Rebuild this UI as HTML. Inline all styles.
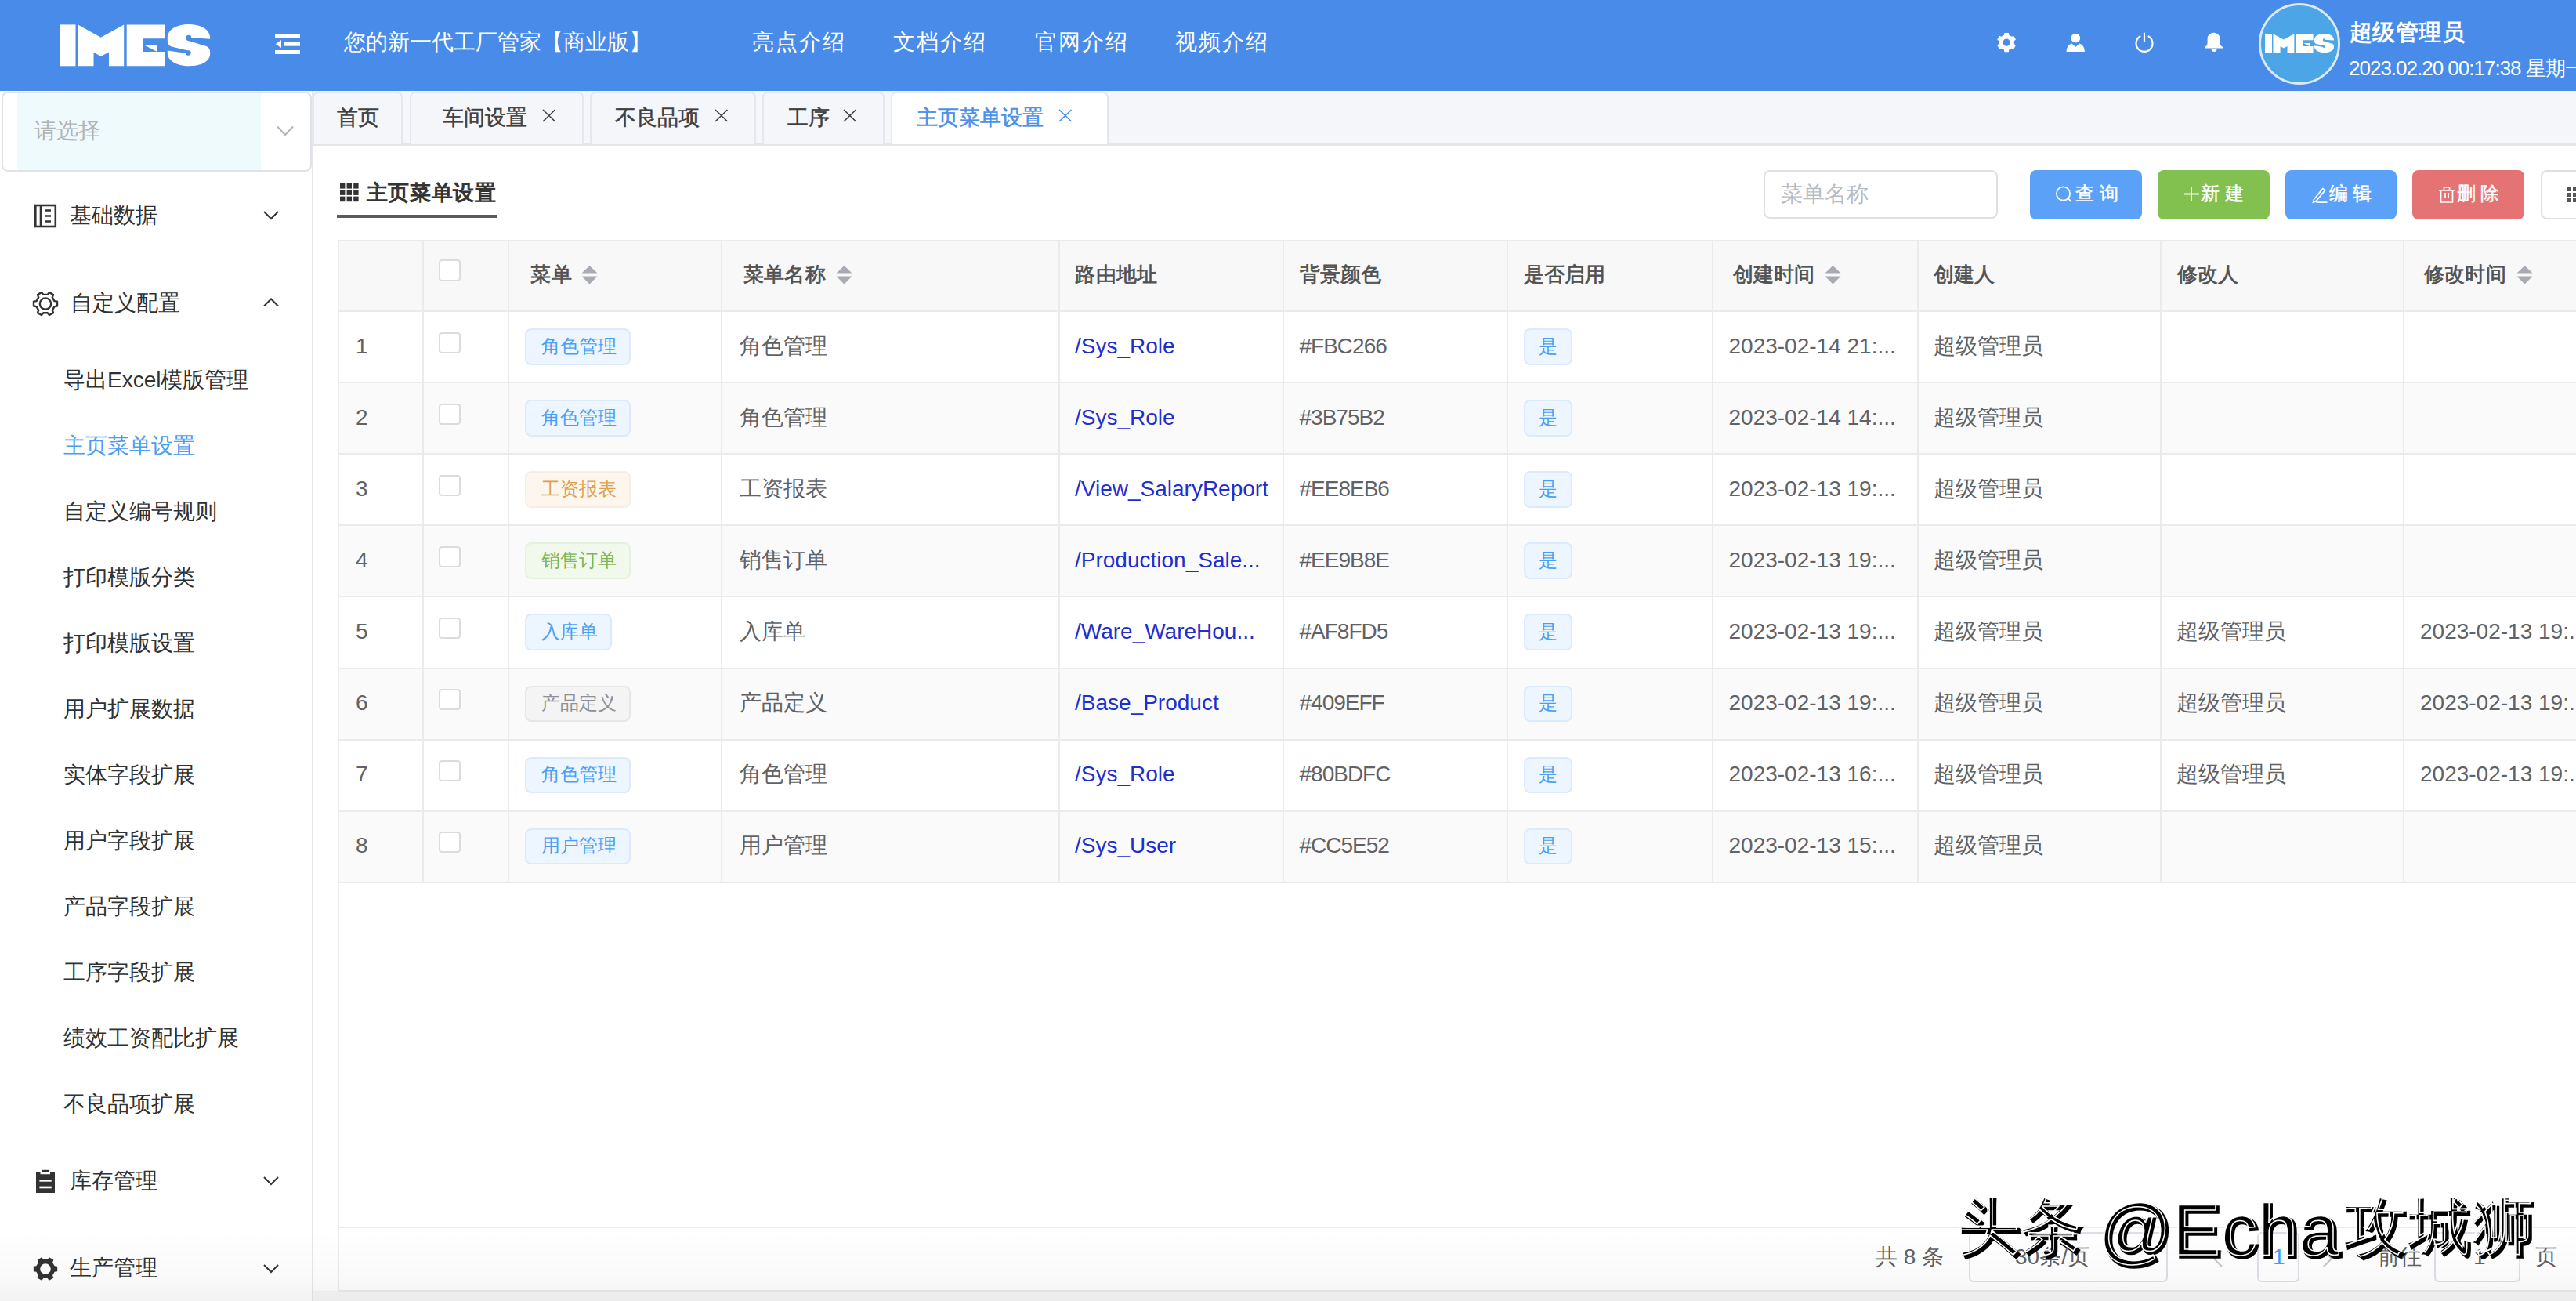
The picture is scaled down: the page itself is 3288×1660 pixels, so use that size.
<!DOCTYPE html><html><head><meta charset="utf-8"><style>
html,body{margin:0;padding:0;}
body{width:3288px;height:1660px;overflow:hidden;position:relative;background:#f4f4f5;font-family:"Liberation Sans", sans-serif;}
.t{position:absolute;white-space:nowrap;}
.r{position:absolute;box-sizing:border-box;}
svg{position:absolute;overflow:visible;}
</style></head><body>
<div class="r" style="left:398.0px;top:116.0px;width:2890.0px;height:1530.5px;background:#fff;"></div>
<div class="r" style="left:0.0px;top:0.0px;width:3288.0px;height:116.0px;background:#488be8;"></div>
<svg style="left:76.8px;top:31px" width="191.2" height="53.3" viewBox="0 0 191.2 53.3" preserveAspectRatio="none">
<g fill="#fff">
<rect x="0" y="0.4" width="19.5" height="52.9"/>
<path d="M22.6 0.4 L51.7 16.7 L81.2 0.4 L81.2 53.3 L62 53.3 L62 35.4 L51.7 41 L42.5 35.4 L42.5 53.3 L22.6 53.3 Z"/>
<path d="M84.7 0.4 L133.7 0.4 L133.7 18.3 L105 18.3 L105 35 L133.7 35 L133.7 53.3 L84.7 53.3 Z"/>
<path d="M107 26.6 L123.7 26.6 L123.7 35 Z"/>
<path d="M164.2 0 C180 0 191.2 7 191.2 17.5 L191.2 18.8 L164.2 17 C159 16.6 159 20.2 164 21.3 L185 27.5 C191 29.5 191.2 33 191.2 38 C191.2 47 180 53.3 164.2 53.3 C148 53.3 136.8 46 136.8 36.5 L136.8 33.5 L163.2 37.2 C167.6 37.7 167.6 34.6 163 33.6 L142 28.5 C137 27 136.8 22 136.8 17.5 C136.8 7 148 0 164.2 0 Z"/>
</g>
<circle cx="163.9" cy="17" r="3.3" fill="#488be8"/>
<circle cx="163.3" cy="36.5" r="3.3" fill="#488be8"/>
</svg>
<svg style="left:340px;top:30px" width="60" height="50" viewBox="340 30 60 50">
<g fill="#fff"><rect x="351" y="43" width="32" height="5"/><rect x="362" y="53.7" width="21" height="5"/><rect x="351" y="64" width="32" height="5"/>
<path d="M351.7 56.2 L359 51 L359 61 Z"/></g></svg>
<div class="t " style="left:439.0px;top:40.3px;font-size:28px;line-height:28px;color:#fff;font-weight:normal;letter-spacing:0px;">您的新一代工厂管家【商业版】</div>
<div class="t " style="left:960.0px;top:39.8px;font-size:28px;line-height:28px;color:#fff;font-weight:normal;letter-spacing:2px;">亮点介绍</div>
<div class="t " style="left:1140.0px;top:39.8px;font-size:28px;line-height:28px;color:#fff;font-weight:normal;letter-spacing:2px;">文档介绍</div>
<div class="t " style="left:1321.0px;top:39.8px;font-size:28px;line-height:28px;color:#fff;font-weight:normal;letter-spacing:2px;">官网介绍</div>
<div class="t " style="left:1500.0px;top:39.8px;font-size:28px;line-height:28px;color:#fff;font-weight:normal;letter-spacing:2px;">视频介绍</div>
<svg style="left:2540px;top:30px" width="320" height="50" viewBox="2540 30 320 50">
<g fill="#fff">
<path fill-rule="evenodd" d="M2570.82 56.09 L2572.96 57.83 L2570.17 62.66 L2567.59 61.67 L2564.32 63.56 L2563.89 66.28 L2558.31 66.28 L2557.88 63.56 L2554.61 61.67 L2552.03 62.66 L2549.24 57.83 L2551.38 56.09 L2551.38 52.31 L2549.24 50.57 L2552.03 45.74 L2554.61 46.73 L2557.88 44.84 L2558.31 42.12 L2563.89 42.12 L2564.32 44.84 L2567.59 46.73 L2570.17 45.74 L2572.96 50.57 L2570.82 52.31 Z M2565.70 54.2 A4.6 4.6 0 1 0 2556.50 54.2 A4.6 4.6 0 1 0 2565.70 54.2 Z"/>
<circle cx="2649.3" cy="48.6" r="5.9"/>
<path d="M2637.5 66 C2638 60 2640.5 56.5 2644.5 55.6 L2649.3 60 L2654 55.6 C2658 56.5 2660.5 60 2661 66 Z"/>
<path d="M2814 61.5 h23 v-1.8 c-2 -1 -3.4 -2.5 -3.4 -5.5 v-4.5 c0 -4.5 -3 -7.5 -8 -7.9 c-5 0.4 -8 3.4 -8 7.9 v4.5 c0 3 -1.4 4.5 -3.4 5.5 Z"/>
<path d="M2822.5 62.5 h7 a3.5 3.5 0 0 1 -7 0 Z"/>
</g>
<g fill="none" stroke="#fff" stroke-width="2.2" stroke-linecap="round">
<path d="M2731.5 46.5 A10.5 10.5 0 1 0 2742.5 46.5"/>
<path d="M2737 42.5 V53"/>
</g>
</svg>
<div class="r" style="left:2883.0px;top:4.0px;width:104.0px;height:104.0px;border-radius:50%;background:#4ba5e7;border:3px solid #dce9f7;"></div>
<svg style="left:2891px;top:43px" width="88" height="24.2" viewBox="0 0 191.2 53.3" preserveAspectRatio="none">
<g fill="#fff">
<rect x="0" y="0.4" width="19.5" height="52.9"/>
<path d="M22.6 0.4 L51.7 16.7 L81.2 0.4 L81.2 53.3 L62 53.3 L62 35.4 L51.7 41 L42.5 35.4 L42.5 53.3 L22.6 53.3 Z"/>
<path d="M84.7 0.4 L133.7 0.4 L133.7 18.3 L105 18.3 L105 35 L133.7 35 L133.7 53.3 L84.7 53.3 Z"/>
<path d="M107 26.6 L123.7 26.6 L123.7 35 Z"/>
<path d="M164.2 0 C180 0 191.2 7 191.2 17.5 L191.2 18.8 L164.2 17 C159 16.6 159 20.2 164 21.3 L185 27.5 C191 29.5 191.2 33 191.2 38 C191.2 47 180 53.3 164.2 53.3 C148 53.3 136.8 46 136.8 36.5 L136.8 33.5 L163.2 37.2 C167.6 37.7 167.6 34.6 163 33.6 L142 28.5 C137 27 136.8 22 136.8 17.5 C136.8 7 148 0 164.2 0 Z"/>
</g>
<circle cx="163.9" cy="17" r="3.3" fill="#4ba5e7"/>
<circle cx="163.3" cy="36.5" r="3.3" fill="#4ba5e7"/>
</svg>
<div class="t " style="left:2998.5px;top:26.6px;font-size:29px;line-height:29px;color:#fff;font-weight:bold;letter-spacing:0.5px;">超级管理员</div>
<div class="t" style="left:2998px;top:72px;font-size:26px;line-height:30px;color:#fff;letter-spacing:-1px;">2023.02.20 00:17:38 星期一</div>
<div class="r" style="left:0.0px;top:116.0px;width:398.0px;height:1544.0px;background:#fff;"></div>
<div class="r" style="left:1.5px;top:117.0px;width:396.5px;height:101.5px;border:2px solid #dfe3e8;border-radius:8px;background:#fff;"></div>
<div class="r" style="left:22.0px;top:119.0px;width:311.0px;height:97.5px;background:#effafd;"></div>
<div class="t " style="left:44.0px;top:152.6px;font-size:28px;line-height:28px;color:#b0b3b8;font-weight:normal;letter-spacing:0px;">请选择</div>
<svg style="left:350px;top:155px" width="30" height="25" viewBox="350 155 30 25"><path d="M354 161.5 L364 172 L374 161.5" fill="none" stroke="#b0b3b8" stroke-width="2"/></svg>
<svg style="left:40px;top:255px" width="40" height="40" viewBox="40 255 40 40"><g fill="none" stroke="#333" stroke-width="2.6">
<rect x="45.3" y="262" width="25.5" height="27"/><path d="M52 262 V289 M57 268.5 H65 M57 275.5 H65 M57 282.5 H65"/></g></svg>
<div class="t " style="left:88.6px;top:260.6px;font-size:28px;line-height:28px;color:#303133;font-weight:normal;letter-spacing:0px;">基础数据</div>
<svg style="left:330px;top:260px" width="30" height="30" viewBox="330 260 30 30"><path d="M337 270 L346 279 L355 270" fill="none" stroke="#333" stroke-width="2"/></svg>
<svg style="left:38px;top:367px" width="40" height="40" viewBox="38 367 40 40"><g fill="none" stroke="#333" stroke-width="2.4" stroke-linejoin="round">
<path d="M69.48 384.09 L73.02 384.68 L73.02 390.52 L69.48 391.11 L66.78 395.78 L68.04 399.15 L62.98 402.07 L60.70 399.29 L55.30 399.29 L53.02 402.07 L47.96 399.15 L49.22 395.78 L46.52 391.11 L42.98 390.52 L42.98 384.68 L46.52 384.09 L49.22 379.42 L47.96 376.05 L53.02 373.13 L55.30 375.91 L60.70 375.91 L62.98 373.13 L68.04 376.05 L66.78 379.42 Z"/>
<circle cx="58" cy="387.6" r="7.2"/></g></svg>
<div class="t " style="left:90.0px;top:373.1px;font-size:28px;line-height:28px;color:#303133;font-weight:normal;letter-spacing:0px;">自定义配置</div>
<svg style="left:330px;top:372px" width="30" height="30" viewBox="330 372 30 30"><path d="M337 390.5 L346 381.5 L355 390.5" fill="none" stroke="#333" stroke-width="2"/></svg>
<div class="t " style="left:81.0px;top:470.6px;font-size:28px;line-height:28px;color:#303133;font-weight:normal;letter-spacing:0px;">导出Excel模版管理</div>
<div class="t " style="left:81.0px;top:554.6px;font-size:28px;line-height:28px;color:#4c9cf0;font-weight:normal;letter-spacing:0px;">主页菜单设置</div>
<div class="t " style="left:81.0px;top:638.7px;font-size:28px;line-height:28px;color:#303133;font-weight:normal;letter-spacing:0px;">自定义编号规则</div>
<div class="t " style="left:81.0px;top:722.8px;font-size:28px;line-height:28px;color:#303133;font-weight:normal;letter-spacing:0px;">打印模版分类</div>
<div class="t " style="left:81.0px;top:806.9px;font-size:28px;line-height:28px;color:#303133;font-weight:normal;letter-spacing:0px;">打印模版设置</div>
<div class="t " style="left:81.0px;top:890.9px;font-size:28px;line-height:28px;color:#303133;font-weight:normal;letter-spacing:0px;">用户扩展数据</div>
<div class="t " style="left:81.0px;top:975.0px;font-size:28px;line-height:28px;color:#303133;font-weight:normal;letter-spacing:0px;">实体字段扩展</div>
<div class="t " style="left:81.0px;top:1059.1px;font-size:28px;line-height:28px;color:#303133;font-weight:normal;letter-spacing:0px;">用户字段扩展</div>
<div class="t " style="left:81.0px;top:1143.1px;font-size:28px;line-height:28px;color:#303133;font-weight:normal;letter-spacing:0px;">产品字段扩展</div>
<div class="t " style="left:81.0px;top:1227.2px;font-size:28px;line-height:28px;color:#303133;font-weight:normal;letter-spacing:0px;">工序字段扩展</div>
<div class="t " style="left:81.0px;top:1311.3px;font-size:28px;line-height:28px;color:#303133;font-weight:normal;letter-spacing:0px;">绩效工资配比扩展</div>
<div class="t " style="left:81.0px;top:1395.3px;font-size:28px;line-height:28px;color:#303133;font-weight:normal;letter-spacing:0px;">不良品项扩展</div>
<svg style="left:40px;top:1488px" width="40" height="40" viewBox="40 1488 40 40"><g fill="#333">
<rect x="53.4" y="1492.8" width="8.6" height="2.6"/>
<path d="M46 1496 h5.5 v2.2 h12.5 v-2.2 h6 v26 h-24 Z"/></g><g fill="#fff"><rect x="50.4" y="1505" width="15.3" height="2.7"/><rect x="50.4" y="1513.6" width="15.3" height="2.7"/></g></svg>
<div class="t " style="left:89.0px;top:1493.3px;font-size:28px;line-height:28px;color:#303133;font-weight:normal;letter-spacing:0px;">库存管理</div>
<svg style="left:330px;top:1495px" width="30" height="30" viewBox="330 1495 30 30"><path d="M337 1502 L346 1511 L355 1502" fill="none" stroke="#333" stroke-width="2"/></svg>
<svg style="left:38px;top:1600px" width="40" height="40" viewBox="38 1600 40 40"><path fill="#333" fill-rule="evenodd" d="M69.60 1615.23 L73.16 1615.78 L73.16 1622.22 L69.60 1622.77 L67.07 1627.16 L68.37 1630.52 L62.79 1633.74 L60.54 1630.93 L55.46 1630.93 L53.21 1633.74 L47.63 1630.52 L48.93 1627.16 L46.40 1622.77 L42.84 1622.22 L42.84 1615.78 L46.40 1615.23 L48.93 1610.84 L47.63 1607.48 L53.21 1604.26 L55.46 1607.07 L60.54 1607.07 L62.79 1604.26 L68.37 1607.48 L67.07 1610.84 Z M64.80 1619 A6.8 6.8 0 1 0 51.20 1619 A6.8 6.8 0 1 0 64.80 1619 Z"/></svg>
<div class="t " style="left:89.0px;top:1604.4px;font-size:28px;line-height:28px;color:#303133;font-weight:normal;letter-spacing:0px;">生产管理</div>
<svg style="left:330px;top:1605px" width="30" height="30" viewBox="330 1605 30 30"><path d="M337 1614 L346 1623 L355 1614" fill="none" stroke="#333" stroke-width="2"/></svg>
<div class="r" style="left:399.0px;top:116.0px;width:2889.0px;height:67.0px;background:#f5f6fa;"></div>
<div class="r" style="left:399.0px;top:183.0px;width:2889.0px;height:2.5px;background:#e5e6e9;"></div>
<div class="r" style="left:398.0px;top:116.0px;width:1.6px;height:1544.0px;background:#e6e7ea;"></div>
<div class="r" style="left:398.9px;top:117.0px;width:115.6px;height:67.0px;border:2px solid #e4e7ed;border-bottom:none;border-radius:7px 7px 0 0;background:#f5f6fa;"></div>
<div class="t " style="left:429.5px;top:137.1px;font-size:26.5px;line-height:26.5px;color:#404040;font-weight:normal;letter-spacing:0px;-webkit-text-stroke:0.5px #404040;">首页</div>
<div class="r" style="left:523.0px;top:117.0px;width:222.0px;height:67.0px;border:2px solid #e4e7ed;border-bottom:none;border-radius:7px 7px 0 0;background:#f5f6fa;"></div>
<div class="t " style="left:565.3px;top:137.1px;font-size:26.5px;line-height:26.5px;color:#404040;font-weight:normal;letter-spacing:0px;-webkit-text-stroke:0.5px #404040;">车间设置</div>
<svg style="left:691.7px;top:139px" width="18" height="17" viewBox="0 0 18 17"><path d="M1 1 L16.5 16 M16.5 1 L1 16" stroke="#404040" stroke-width="1.6" fill="none"/></svg>
<div class="r" style="left:753.0px;top:117.0px;width:212.0px;height:67.0px;border:2px solid #e4e7ed;border-bottom:none;border-radius:7px 7px 0 0;background:#f5f6fa;"></div>
<div class="t " style="left:784.6px;top:137.1px;font-size:26.5px;line-height:26.5px;color:#404040;font-weight:normal;letter-spacing:0px;-webkit-text-stroke:0.5px #404040;">不良品项</div>
<svg style="left:911.8px;top:139px" width="18" height="17" viewBox="0 0 18 17"><path d="M1 1 L16.5 16 M16.5 1 L1 16" stroke="#404040" stroke-width="1.6" fill="none"/></svg>
<div class="r" style="left:973.0px;top:117.0px;width:156.0px;height:67.0px;border:2px solid #e4e7ed;border-bottom:none;border-radius:7px 7px 0 0;background:#f5f6fa;"></div>
<div class="t " style="left:1004.8px;top:137.1px;font-size:26.5px;line-height:26.5px;color:#404040;font-weight:normal;letter-spacing:0px;-webkit-text-stroke:0.5px #404040;">工序</div>
<svg style="left:1075.7px;top:139px" width="18" height="17" viewBox="0 0 18 17"><path d="M1 1 L16.5 16 M16.5 1 L1 16" stroke="#404040" stroke-width="1.6" fill="none"/></svg>
<div class="r" style="left:1137.0px;top:117.0px;width:278.0px;height:67.0px;border:2px solid #e4e7ed;border-bottom:none;border-radius:7px 7px 0 0;background:#fff;"></div>
<div class="t " style="left:1169.5px;top:137.1px;font-size:26.5px;line-height:26.5px;color:#4a90e8;font-weight:normal;letter-spacing:0px;-webkit-text-stroke:0.5px #4a90e8;">主页菜单设置</div>
<svg style="left:1351px;top:139px" width="18" height="17" viewBox="0 0 18 17"><path d="M1 1 L16.5 16 M16.5 1 L1 16" stroke="#4a90e8" stroke-width="1.6" fill="none"/></svg>
<svg style="left:434px;top:234px" width="25" height="24" viewBox="0 0 25 24"><g fill="#333"><rect x="0.0" y="0.0" width="6.4" height="6.6"/><rect x="8.6" y="0.0" width="6.4" height="6.6"/><rect x="17.2" y="0.0" width="6.4" height="6.6"/><rect x="0.0" y="8.3" width="6.4" height="6.6"/><rect x="8.6" y="8.3" width="6.4" height="6.6"/><rect x="17.2" y="8.3" width="6.4" height="6.6"/><rect x="0.0" y="16.6" width="6.4" height="6.6"/><rect x="8.6" y="16.6" width="6.4" height="6.6"/><rect x="17.2" y="16.6" width="6.4" height="6.6"/></g></svg>
<div class="t " style="left:467.5px;top:232.7px;font-size:27px;line-height:27px;color:#333;font-weight:normal;letter-spacing:0.7px;-webkit-text-stroke:1.1px #333;">主页菜单设置</div>
<div class="r" style="left:430.0px;top:274.0px;width:204.0px;height:3.8px;background:#5a5a5a;"></div>
<div class="r" style="left:2251.0px;top:216.7px;width:299.0px;height:62.8px;border:2px solid #dfe0e4;border-radius:8px;background:#fff;"></div>
<div class="t " style="left:2273.0px;top:233.6px;font-size:28px;line-height:28px;color:#b8bcc3;font-weight:normal;letter-spacing:0px;">菜单名称</div>
<div class="r" style="left:2591.0px;top:216.5px;width:142.5px;height:63.0px;background:#5aa1f7;border-radius:8px;"></div>
<div class="r" style="left:2754.0px;top:216.5px;width:142.5px;height:63.0px;background:#82c14f;border-radius:8px;"></div>
<div class="r" style="left:2916.6px;top:216.5px;width:142.1px;height:63.0px;background:#5aa1f7;border-radius:8px;"></div>
<div class="r" style="left:3079.0px;top:216.5px;width:143.0px;height:63.0px;background:#e57373;border-radius:8px;"></div>
<div class="r" style="left:3242.7px;top:216.5px;width:87.3px;height:63.0px;border:2px solid #dcdfe6;border-radius:8px;background:#fff;"></div>
<div class="t " style="left:2648.9px;top:235.0px;font-size:24px;line-height:24px;color:#fff;font-weight:normal;letter-spacing:0px;-webkit-text-stroke:0.5px #fff;">查 询</div>
<div class="t " style="left:2809.0px;top:235.0px;font-size:24px;line-height:24px;color:#fff;font-weight:normal;letter-spacing:0px;-webkit-text-stroke:0.5px #fff;">新 建</div>
<div class="t " style="left:2972.5px;top:235.0px;font-size:24px;line-height:24px;color:#fff;font-weight:normal;letter-spacing:0px;-webkit-text-stroke:0.5px #fff;">编 辑</div>
<div class="t " style="left:3135.5px;top:235.0px;font-size:24px;line-height:24px;color:#fff;font-weight:normal;letter-spacing:0px;-webkit-text-stroke:0.5px #fff;">删 除</div>
<svg style="left:2623px;top:237px" width="23" height="22" viewBox="0 0 23 22"><circle cx="10.5" cy="10" r="8.6" fill="none" stroke="#fff" stroke-width="1.8"/><path d="M16.5 16 L20.5 20" stroke="#fff" stroke-width="1.8"/></svg>
<svg style="left:2787px;top:237px" width="21" height="21" viewBox="0 0 21 21"><path d="M10 1 V20 M1 10.5 H20" stroke="#fff" stroke-width="1.8"/></svg>
<svg style="left:2950px;top:236px" width="22" height="24" viewBox="0 0 22 24"><path d="M3.5 18.5 L2.5 22 L6 21 L17.5 7 L14.8 4.5 Z M6.5 22.2 H20.5" fill="none" stroke="#fff" stroke-width="1.7"/></svg>
<svg style="left:3112px;top:236px" width="22" height="24" viewBox="0 0 22 24"><path d="M1 7 H21 M7.5 7 V3 H14.5 V7 M3.5 7 V22 H18.5 V7 M9 10 V17 M13 10 V17" fill="none" stroke="#fff" stroke-width="1.7"/></svg>
<svg style="left:3277px;top:239px" width="20" height="20" viewBox="0 0 20 20"><g fill="#555"><rect x="0" y="0" width="5" height="5"/><rect x="7" y="0" width="5" height="5"/><rect x="14" y="0" width="5" height="5"/><rect x="0" y="7" width="5" height="5"/><rect x="7" y="7" width="5" height="5"/><rect x="14" y="7" width="5" height="5"/><rect x="0" y="14" width="5" height="5"/><rect x="7" y="14" width="5" height="5"/><rect x="14" y="14" width="5" height="5"/></g></svg>
<div class="r" style="left:430.6px;top:306.4px;width:2857.4px;height:90.0px;background:#f8f8f9;"></div>
<div class="r" style="left:430.6px;top:487.4px;width:2857.4px;height:91.0px;background:#fafafa;"></div>
<div class="r" style="left:430.6px;top:669.4px;width:2857.4px;height:91.0px;background:#fafafa;"></div>
<div class="r" style="left:430.6px;top:851.5px;width:2857.4px;height:91.0px;background:#fafafa;"></div>
<div class="r" style="left:430.6px;top:1033.5px;width:2857.4px;height:91.0px;background:#fafafa;"></div>
<div class="r" style="left:430.6px;top:306.4px;width:2857.4px;height:2.0px;background:#ebebee;"></div>
<div class="r" style="left:430.6px;top:396.4px;width:2857.4px;height:2.0px;background:#ebebee;"></div>
<div class="r" style="left:430.6px;top:487.4px;width:2857.4px;height:2.0px;background:#ebebee;"></div>
<div class="r" style="left:430.6px;top:578.4px;width:2857.4px;height:2.0px;background:#ebebee;"></div>
<div class="r" style="left:430.6px;top:669.4px;width:2857.4px;height:2.0px;background:#ebebee;"></div>
<div class="r" style="left:430.6px;top:760.4px;width:2857.4px;height:2.0px;background:#ebebee;"></div>
<div class="r" style="left:430.6px;top:851.5px;width:2857.4px;height:2.0px;background:#ebebee;"></div>
<div class="r" style="left:430.6px;top:942.5px;width:2857.4px;height:2.0px;background:#ebebee;"></div>
<div class="r" style="left:430.6px;top:1033.5px;width:2857.4px;height:2.0px;background:#ebebee;"></div>
<div class="r" style="left:430.6px;top:1124.5px;width:2857.4px;height:2.0px;background:#ebebee;"></div>
<div class="r" style="left:430.6px;top:306.4px;width:2.0px;height:819.1px;background:#ebebee;"></div>
<div class="r" style="left:538.8px;top:306.4px;width:2.0px;height:819.1px;background:#ebebee;"></div>
<div class="r" style="left:648.4px;top:306.4px;width:2.0px;height:819.1px;background:#ebebee;"></div>
<div class="r" style="left:920.3px;top:306.4px;width:2.0px;height:819.1px;background:#ebebee;"></div>
<div class="r" style="left:1351.0px;top:306.4px;width:2.0px;height:819.1px;background:#ebebee;"></div>
<div class="r" style="left:1636.7px;top:306.4px;width:2.0px;height:819.1px;background:#ebebee;"></div>
<div class="r" style="left:1923.0px;top:306.4px;width:2.0px;height:819.1px;background:#ebebee;"></div>
<div class="r" style="left:2184.5px;top:306.4px;width:2.0px;height:819.1px;background:#ebebee;"></div>
<div class="r" style="left:2447.3px;top:306.4px;width:2.0px;height:819.1px;background:#ebebee;"></div>
<div class="r" style="left:2756.6px;top:306.4px;width:2.0px;height:819.1px;background:#ebebee;"></div>
<div class="r" style="left:3067.0px;top:306.4px;width:2.0px;height:819.1px;background:#ebebee;"></div>
<div class="r" style="left:430.6px;top:1124.5px;width:2.0px;height:523.0px;background:#ebebee;"></div>
<div class="r" style="left:430.6px;top:1645.5px;width:2857.4px;height:2.0px;background:#ebebee;"></div>
<div class="r" style="left:430.6px;top:1564.5px;width:2857.4px;height:2.0px;background:#ebebee;"></div>
<div class="t " style="left:677.4px;top:336.7px;font-size:26.2px;line-height:26.2px;color:#515151;font-weight:normal;letter-spacing:0.2px;-webkit-text-stroke:0.7px #515151;">菜单</div>
<svg style="left:742px;top:339px" width="21" height="24" viewBox="0 0 21 24"><path d="M10.5 0 L20.5 9.5 H0.5 Z M0.5 13.5 H20.5 L10.5 23.5 Z" fill="#a8abb2"/></svg>
<div class="t " style="left:949.0px;top:336.7px;font-size:26.2px;line-height:26.2px;color:#515151;font-weight:normal;letter-spacing:0.2px;-webkit-text-stroke:0.7px #515151;">菜单名称</div>
<svg style="left:1066.8px;top:339px" width="21" height="24" viewBox="0 0 21 24"><path d="M10.5 0 L20.5 9.5 H0.5 Z M0.5 13.5 H20.5 L10.5 23.5 Z" fill="#a8abb2"/></svg>
<div class="t " style="left:1372.4px;top:336.7px;font-size:26.2px;line-height:26.2px;color:#515151;font-weight:normal;letter-spacing:0.2px;-webkit-text-stroke:0.7px #515151;">路由地址</div>
<div class="t " style="left:1658.5px;top:336.7px;font-size:26.2px;line-height:26.2px;color:#515151;font-weight:normal;letter-spacing:0.2px;-webkit-text-stroke:0.7px #515151;">背景颜色</div>
<div class="t " style="left:1944.6px;top:336.7px;font-size:26.2px;line-height:26.2px;color:#515151;font-weight:normal;letter-spacing:0.2px;-webkit-text-stroke:0.7px #515151;">是否启用</div>
<div class="t " style="left:2211.8px;top:336.7px;font-size:26.2px;line-height:26.2px;color:#515151;font-weight:normal;letter-spacing:0.2px;-webkit-text-stroke:0.7px #515151;">创建时间</div>
<svg style="left:2329px;top:339px" width="21" height="24" viewBox="0 0 21 24"><path d="M10.5 0 L20.5 9.5 H0.5 Z M0.5 13.5 H20.5 L10.5 23.5 Z" fill="#a8abb2"/></svg>
<div class="t " style="left:2468.0px;top:336.7px;font-size:26.2px;line-height:26.2px;color:#515151;font-weight:normal;letter-spacing:0.2px;-webkit-text-stroke:0.7px #515151;">创建人</div>
<div class="t " style="left:2778.6px;top:336.7px;font-size:26.2px;line-height:26.2px;color:#515151;font-weight:normal;letter-spacing:0.2px;-webkit-text-stroke:0.7px #515151;">修改人</div>
<div class="t " style="left:3094.0px;top:336.7px;font-size:26.2px;line-height:26.2px;color:#515151;font-weight:normal;letter-spacing:0.2px;-webkit-text-stroke:0.7px #515151;">修改时间</div>
<svg style="left:3211.6px;top:339px" width="21" height="24" viewBox="0 0 21 24"><path d="M10.5 0 L20.5 9.5 H0.5 Z M0.5 13.5 H20.5 L10.5 23.5 Z" fill="#a8abb2"/></svg>
<div class="r" style="left:560.4px;top:331.4px;width:27.2px;height:27.2px;border:2px solid #dcdcde;border-radius:4px;background:#fff;"></div>
<div class="t " style="left:454.0px;top:427.5px;font-size:28px;line-height:28px;color:#606266;font-weight:normal;letter-spacing:0px;">1</div>
<div class="r" style="left:560.4px;top:424.0px;width:27.2px;height:27.2px;border:2px solid #dcdcde;border-radius:4px;background:#fff;"></div>
<div class="r" style="left:670.0px;top:419.4px;width:135.4px;height:46.6px;background:#edf5fe;border:2px solid #dcebfb;border-radius:8px;"></div>
<div class="t " style="left:690.6px;top:430.3px;font-size:24px;line-height:24px;color:#4b9ef5;font-weight:normal;letter-spacing:0px;">角色管理</div>
<div class="t " style="left:944.0px;top:427.5px;font-size:28px;line-height:28px;color:#606266;font-weight:normal;letter-spacing:0px;">角色管理</div>
<div class="t " style="left:1372.0px;top:427.5px;font-size:28px;line-height:28px;color:#1f2ecf;font-weight:normal;letter-spacing:0px;">/Sys_Role</div>
<div class="t " style="left:1658.5px;top:427.5px;font-size:28px;line-height:28px;color:#606266;font-weight:normal;letter-spacing:-1px;">#FBC266</div>
<div class="r" style="left:1944.6px;top:419.4px;width:62.7px;height:46.6px;background:#edf5fe;border:2px solid #dcebfb;border-radius:8px;"></div>
<div class="t " style="left:1963.5px;top:430.3px;font-size:24px;line-height:24px;color:#4b9ef5;font-weight:normal;letter-spacing:0px;">是</div>
<div class="t " style="left:2206.5px;top:427.5px;font-size:28px;line-height:28px;color:#606266;font-weight:normal;letter-spacing:0px;">2023-02-14 21:...</div>
<div class="t " style="left:2468.0px;top:427.5px;font-size:28px;line-height:28px;color:#606266;font-weight:normal;letter-spacing:0px;">超级管理员</div>
<div class="t " style="left:454.0px;top:518.5px;font-size:28px;line-height:28px;color:#606266;font-weight:normal;letter-spacing:0px;">2</div>
<div class="r" style="left:560.4px;top:515.0px;width:27.2px;height:27.2px;border:2px solid #dcdcde;border-radius:4px;background:#fff;"></div>
<div class="r" style="left:670.0px;top:510.4px;width:135.4px;height:46.6px;background:#edf5fe;border:2px solid #dcebfb;border-radius:8px;"></div>
<div class="t " style="left:690.6px;top:521.3px;font-size:24px;line-height:24px;color:#4b9ef5;font-weight:normal;letter-spacing:0px;">角色管理</div>
<div class="t " style="left:944.0px;top:518.5px;font-size:28px;line-height:28px;color:#606266;font-weight:normal;letter-spacing:0px;">角色管理</div>
<div class="t " style="left:1372.0px;top:518.5px;font-size:28px;line-height:28px;color:#1f2ecf;font-weight:normal;letter-spacing:0px;">/Sys_Role</div>
<div class="t " style="left:1658.5px;top:518.5px;font-size:28px;line-height:28px;color:#606266;font-weight:normal;letter-spacing:-1px;">#3B75B2</div>
<div class="r" style="left:1944.6px;top:510.4px;width:62.7px;height:46.6px;background:#edf5fe;border:2px solid #dcebfb;border-radius:8px;"></div>
<div class="t " style="left:1963.5px;top:521.3px;font-size:24px;line-height:24px;color:#4b9ef5;font-weight:normal;letter-spacing:0px;">是</div>
<div class="t " style="left:2206.5px;top:518.5px;font-size:28px;line-height:28px;color:#606266;font-weight:normal;letter-spacing:0px;">2023-02-14 14:...</div>
<div class="t " style="left:2468.0px;top:518.5px;font-size:28px;line-height:28px;color:#606266;font-weight:normal;letter-spacing:0px;">超级管理员</div>
<div class="t " style="left:454.0px;top:609.5px;font-size:28px;line-height:28px;color:#606266;font-weight:normal;letter-spacing:0px;">3</div>
<div class="r" style="left:560.4px;top:606.0px;width:27.2px;height:27.2px;border:2px solid #dcdcde;border-radius:4px;background:#fff;"></div>
<div class="r" style="left:670.0px;top:601.4px;width:135.4px;height:46.6px;background:#fdf6ee;border:2px solid #f8ede0;border-radius:8px;"></div>
<div class="t " style="left:690.6px;top:612.4px;font-size:24px;line-height:24px;color:#dca24e;font-weight:normal;letter-spacing:0px;">工资报表</div>
<div class="t " style="left:944.0px;top:609.5px;font-size:28px;line-height:28px;color:#606266;font-weight:normal;letter-spacing:0px;">工资报表</div>
<div class="t " style="left:1372.0px;top:609.5px;font-size:28px;line-height:28px;color:#1f2ecf;font-weight:normal;letter-spacing:0px;">/View_SalaryReport</div>
<div class="t " style="left:1658.5px;top:609.5px;font-size:28px;line-height:28px;color:#606266;font-weight:normal;letter-spacing:-1px;">#EE8EB6</div>
<div class="r" style="left:1944.6px;top:601.4px;width:62.7px;height:46.6px;background:#edf5fe;border:2px solid #dcebfb;border-radius:8px;"></div>
<div class="t " style="left:1963.5px;top:612.4px;font-size:24px;line-height:24px;color:#4b9ef5;font-weight:normal;letter-spacing:0px;">是</div>
<div class="t " style="left:2206.5px;top:609.5px;font-size:28px;line-height:28px;color:#606266;font-weight:normal;letter-spacing:0px;">2023-02-13 19:...</div>
<div class="t " style="left:2468.0px;top:609.5px;font-size:28px;line-height:28px;color:#606266;font-weight:normal;letter-spacing:0px;">超级管理员</div>
<div class="t " style="left:454.0px;top:700.5px;font-size:28px;line-height:28px;color:#606266;font-weight:normal;letter-spacing:0px;">4</div>
<div class="r" style="left:560.4px;top:697.0px;width:27.2px;height:27.2px;border:2px solid #dcdcde;border-radius:4px;background:#fff;"></div>
<div class="r" style="left:670.0px;top:692.4px;width:135.4px;height:46.6px;background:#f1f8ec;border:2px solid #e5f1dd;border-radius:8px;"></div>
<div class="t " style="left:690.6px;top:703.4px;font-size:24px;line-height:24px;color:#7ab757;font-weight:normal;letter-spacing:0px;">销售订单</div>
<div class="t " style="left:944.0px;top:700.5px;font-size:28px;line-height:28px;color:#606266;font-weight:normal;letter-spacing:0px;">销售订单</div>
<div class="t " style="left:1372.0px;top:700.5px;font-size:28px;line-height:28px;color:#1f2ecf;font-weight:normal;letter-spacing:0px;">/Production_Sale...</div>
<div class="t " style="left:1658.5px;top:700.5px;font-size:28px;line-height:28px;color:#606266;font-weight:normal;letter-spacing:-1px;">#EE9B8E</div>
<div class="r" style="left:1944.6px;top:692.4px;width:62.7px;height:46.6px;background:#edf5fe;border:2px solid #dcebfb;border-radius:8px;"></div>
<div class="t " style="left:1963.5px;top:703.4px;font-size:24px;line-height:24px;color:#4b9ef5;font-weight:normal;letter-spacing:0px;">是</div>
<div class="t " style="left:2206.5px;top:700.5px;font-size:28px;line-height:28px;color:#606266;font-weight:normal;letter-spacing:0px;">2023-02-13 19:...</div>
<div class="t " style="left:2468.0px;top:700.5px;font-size:28px;line-height:28px;color:#606266;font-weight:normal;letter-spacing:0px;">超级管理员</div>
<div class="t " style="left:454.0px;top:791.5px;font-size:28px;line-height:28px;color:#606266;font-weight:normal;letter-spacing:0px;">5</div>
<div class="r" style="left:560.4px;top:788.0px;width:27.2px;height:27.2px;border:2px solid #dcdcde;border-radius:4px;background:#fff;"></div>
<div class="r" style="left:670.0px;top:783.4px;width:111.0px;height:46.6px;background:#edf5fe;border:2px solid #dcebfb;border-radius:8px;"></div>
<div class="t " style="left:690.6px;top:794.4px;font-size:24px;line-height:24px;color:#4b9ef5;font-weight:normal;letter-spacing:0px;">入库单</div>
<div class="t " style="left:944.0px;top:791.5px;font-size:28px;line-height:28px;color:#606266;font-weight:normal;letter-spacing:0px;">入库单</div>
<div class="t " style="left:1372.0px;top:791.5px;font-size:28px;line-height:28px;color:#1f2ecf;font-weight:normal;letter-spacing:0px;">/Ware_WareHou...</div>
<div class="t " style="left:1658.5px;top:791.5px;font-size:28px;line-height:28px;color:#606266;font-weight:normal;letter-spacing:-1px;">#AF8FD5</div>
<div class="r" style="left:1944.6px;top:783.4px;width:62.7px;height:46.6px;background:#edf5fe;border:2px solid #dcebfb;border-radius:8px;"></div>
<div class="t " style="left:1963.5px;top:794.4px;font-size:24px;line-height:24px;color:#4b9ef5;font-weight:normal;letter-spacing:0px;">是</div>
<div class="t " style="left:2206.5px;top:791.5px;font-size:28px;line-height:28px;color:#606266;font-weight:normal;letter-spacing:0px;">2023-02-13 19:...</div>
<div class="t " style="left:2468.0px;top:791.5px;font-size:28px;line-height:28px;color:#606266;font-weight:normal;letter-spacing:0px;">超级管理员</div>
<div class="t " style="left:2778.0px;top:791.5px;font-size:28px;line-height:28px;color:#606266;font-weight:normal;letter-spacing:0px;">超级管理员</div>
<div class="t " style="left:3089.0px;top:791.5px;font-size:28px;line-height:28px;color:#606266;font-weight:normal;letter-spacing:0px;">2023-02-13 19:...</div>
<div class="t " style="left:454.0px;top:882.5px;font-size:28px;line-height:28px;color:#606266;font-weight:normal;letter-spacing:0px;">6</div>
<div class="r" style="left:560.4px;top:879.1px;width:27.2px;height:27.2px;border:2px solid #dcdcde;border-radius:4px;background:#fff;"></div>
<div class="r" style="left:670.0px;top:874.5px;width:135.4px;height:46.6px;background:#f4f4f5;border:2px solid #e6e6e8;border-radius:8px;"></div>
<div class="t " style="left:690.6px;top:885.4px;font-size:24px;line-height:24px;color:#8f9196;font-weight:normal;letter-spacing:0px;">产品定义</div>
<div class="t " style="left:944.0px;top:882.5px;font-size:28px;line-height:28px;color:#606266;font-weight:normal;letter-spacing:0px;">产品定义</div>
<div class="t " style="left:1372.0px;top:882.5px;font-size:28px;line-height:28px;color:#1f2ecf;font-weight:normal;letter-spacing:0px;">/Base_Product</div>
<div class="t " style="left:1658.5px;top:882.5px;font-size:28px;line-height:28px;color:#606266;font-weight:normal;letter-spacing:-1px;">#409EFF</div>
<div class="r" style="left:1944.6px;top:874.5px;width:62.7px;height:46.6px;background:#edf5fe;border:2px solid #dcebfb;border-radius:8px;"></div>
<div class="t " style="left:1963.5px;top:885.4px;font-size:24px;line-height:24px;color:#4b9ef5;font-weight:normal;letter-spacing:0px;">是</div>
<div class="t " style="left:2206.5px;top:882.5px;font-size:28px;line-height:28px;color:#606266;font-weight:normal;letter-spacing:0px;">2023-02-13 19:...</div>
<div class="t " style="left:2468.0px;top:882.5px;font-size:28px;line-height:28px;color:#606266;font-weight:normal;letter-spacing:0px;">超级管理员</div>
<div class="t " style="left:2778.0px;top:882.5px;font-size:28px;line-height:28px;color:#606266;font-weight:normal;letter-spacing:0px;">超级管理员</div>
<div class="t " style="left:3089.0px;top:882.5px;font-size:28px;line-height:28px;color:#606266;font-weight:normal;letter-spacing:0px;">2023-02-13 19:...</div>
<div class="t " style="left:454.0px;top:973.5px;font-size:28px;line-height:28px;color:#606266;font-weight:normal;letter-spacing:0px;">7</div>
<div class="r" style="left:560.4px;top:970.1px;width:27.2px;height:27.2px;border:2px solid #dcdcde;border-radius:4px;background:#fff;"></div>
<div class="r" style="left:670.0px;top:965.5px;width:135.4px;height:46.6px;background:#edf5fe;border:2px solid #dcebfb;border-radius:8px;"></div>
<div class="t " style="left:690.6px;top:976.4px;font-size:24px;line-height:24px;color:#4b9ef5;font-weight:normal;letter-spacing:0px;">角色管理</div>
<div class="t " style="left:944.0px;top:973.5px;font-size:28px;line-height:28px;color:#606266;font-weight:normal;letter-spacing:0px;">角色管理</div>
<div class="t " style="left:1372.0px;top:973.5px;font-size:28px;line-height:28px;color:#1f2ecf;font-weight:normal;letter-spacing:0px;">/Sys_Role</div>
<div class="t " style="left:1658.5px;top:973.5px;font-size:28px;line-height:28px;color:#606266;font-weight:normal;letter-spacing:-1px;">#80BDFC</div>
<div class="r" style="left:1944.6px;top:965.5px;width:62.7px;height:46.6px;background:#edf5fe;border:2px solid #dcebfb;border-radius:8px;"></div>
<div class="t " style="left:1963.5px;top:976.4px;font-size:24px;line-height:24px;color:#4b9ef5;font-weight:normal;letter-spacing:0px;">是</div>
<div class="t " style="left:2206.5px;top:973.5px;font-size:28px;line-height:28px;color:#606266;font-weight:normal;letter-spacing:0px;">2023-02-13 16:...</div>
<div class="t " style="left:2468.0px;top:973.5px;font-size:28px;line-height:28px;color:#606266;font-weight:normal;letter-spacing:0px;">超级管理员</div>
<div class="t " style="left:2778.0px;top:973.5px;font-size:28px;line-height:28px;color:#606266;font-weight:normal;letter-spacing:0px;">超级管理员</div>
<div class="t " style="left:3089.0px;top:973.5px;font-size:28px;line-height:28px;color:#606266;font-weight:normal;letter-spacing:0px;">2023-02-13 19:...</div>
<div class="t " style="left:454.0px;top:1064.5px;font-size:28px;line-height:28px;color:#606266;font-weight:normal;letter-spacing:0px;">8</div>
<div class="r" style="left:560.4px;top:1061.1px;width:27.2px;height:27.2px;border:2px solid #dcdcde;border-radius:4px;background:#fff;"></div>
<div class="r" style="left:670.0px;top:1056.5px;width:135.4px;height:46.6px;background:#edf5fe;border:2px solid #dcebfb;border-radius:8px;"></div>
<div class="t " style="left:690.6px;top:1067.4px;font-size:24px;line-height:24px;color:#4b9ef5;font-weight:normal;letter-spacing:0px;">用户管理</div>
<div class="t " style="left:944.0px;top:1064.5px;font-size:28px;line-height:28px;color:#606266;font-weight:normal;letter-spacing:0px;">用户管理</div>
<div class="t " style="left:1372.0px;top:1064.5px;font-size:28px;line-height:28px;color:#1f2ecf;font-weight:normal;letter-spacing:0px;">/Sys_User</div>
<div class="t " style="left:1658.5px;top:1064.5px;font-size:28px;line-height:28px;color:#606266;font-weight:normal;letter-spacing:-1px;">#CC5E52</div>
<div class="r" style="left:1944.6px;top:1056.5px;width:62.7px;height:46.6px;background:#edf5fe;border:2px solid #dcebfb;border-radius:8px;"></div>
<div class="t " style="left:1963.5px;top:1067.4px;font-size:24px;line-height:24px;color:#4b9ef5;font-weight:normal;letter-spacing:0px;">是</div>
<div class="t " style="left:2206.5px;top:1064.5px;font-size:28px;line-height:28px;color:#606266;font-weight:normal;letter-spacing:0px;">2023-02-13 15:...</div>
<div class="t " style="left:2468.0px;top:1064.5px;font-size:28px;line-height:28px;color:#606266;font-weight:normal;letter-spacing:0px;">超级管理员</div>
<div class="r" style="left:399.5px;top:1647.5px;width:2888.5px;height:12.5px;background:#f8f8f8;"></div>
<div class="t " style="left:2394.0px;top:1590.1px;font-size:28px;line-height:28px;color:#606266;font-weight:normal;letter-spacing:0px;">共 8 条</div>
<div class="r" style="left:2513.0px;top:1572.0px;width:254.0px;height:64.0px;border:2px solid #dcdfe6;border-radius:6px;background:#fff;"></div>
<div class="t " style="left:2572.0px;top:1590.1px;font-size:28px;line-height:28px;color:#606266;font-weight:normal;letter-spacing:0px;">30条/页</div>
<svg style="left:2820px;top:1594px" width="60" height="24" viewBox="0 0 60 24"><path d="M16 2 L6 12 L16 22" fill="none" stroke="#c0c4cc" stroke-width="2"/></svg>
<div class="r" style="left:2881.0px;top:1572.0px;width:54.0px;height:64.0px;border:2px solid #dcdfe6;border-radius:6px;background:#fff;"></div>
<div class="t " style="left:2901.0px;top:1590.1px;font-size:28px;line-height:28px;color:#409eff;font-weight:normal;letter-spacing:0px;">1</div>
<svg style="left:2960px;top:1594px" width="24" height="24" viewBox="0 0 24 24"><path d="M6 2 L16 12 L6 22" fill="none" stroke="#c0c4cc" stroke-width="2"/></svg>
<div class="t " style="left:3034.6px;top:1590.1px;font-size:28px;line-height:28px;color:#606266;font-weight:normal;letter-spacing:0px;">前往</div>
<div class="r" style="left:3106.7px;top:1572.0px;width:110.0px;height:64.0px;border:2px solid #dcdfe6;border-radius:6px;background:#fff;"></div>
<div class="t " style="left:3157.0px;top:1590.1px;font-size:28px;line-height:28px;color:#606266;font-weight:normal;letter-spacing:0px;">1</div>
<div class="t " style="left:3236.0px;top:1590.1px;font-size:28px;line-height:28px;color:#606266;font-weight:normal;letter-spacing:0px;">页</div>
<div class="t" style="left:2501px;top:1528px;font-size:80px;line-height:80px;color:#000;font-weight:bold;letter-spacing:0px">头条</div>
<div class="t" style="left:2497px;top:1524px;font-size:80px;line-height:80px;color:transparent;-webkit-text-stroke:1.6px #fff;letter-spacing:0.0px">头条</div>
<div class="t" style="left:2994px;top:1528px;font-size:80px;line-height:80px;color:#000;font-weight:bold;letter-spacing:2px">攻城狮</div>
<div class="t" style="left:2990px;top:1524px;font-size:80px;line-height:80px;color:transparent;-webkit-text-stroke:1.6px #fff;letter-spacing:2.0px">攻城狮</div>
<div class="t" style="left:2681px;top:1526px;font-size:92px;line-height:92px;color:#000;letter-spacing:1px;-webkit-text-stroke:3.5px #000">@Echa</div>
<div class="t" style="left:2678px;top:1523px;font-size:92px;line-height:92px;color:transparent;letter-spacing:1px;-webkit-text-stroke:1.5px #fff">@Echa</div>
<div class="r" style="left:0.0px;top:1570.0px;width:3288.0px;height:90.0px;background:linear-gradient(to bottom, rgba(0,0,0,0) 0%, rgba(0,0,0,0.025) 70%, rgba(0,0,0,0.05) 100%);"></div>
</body></html>
